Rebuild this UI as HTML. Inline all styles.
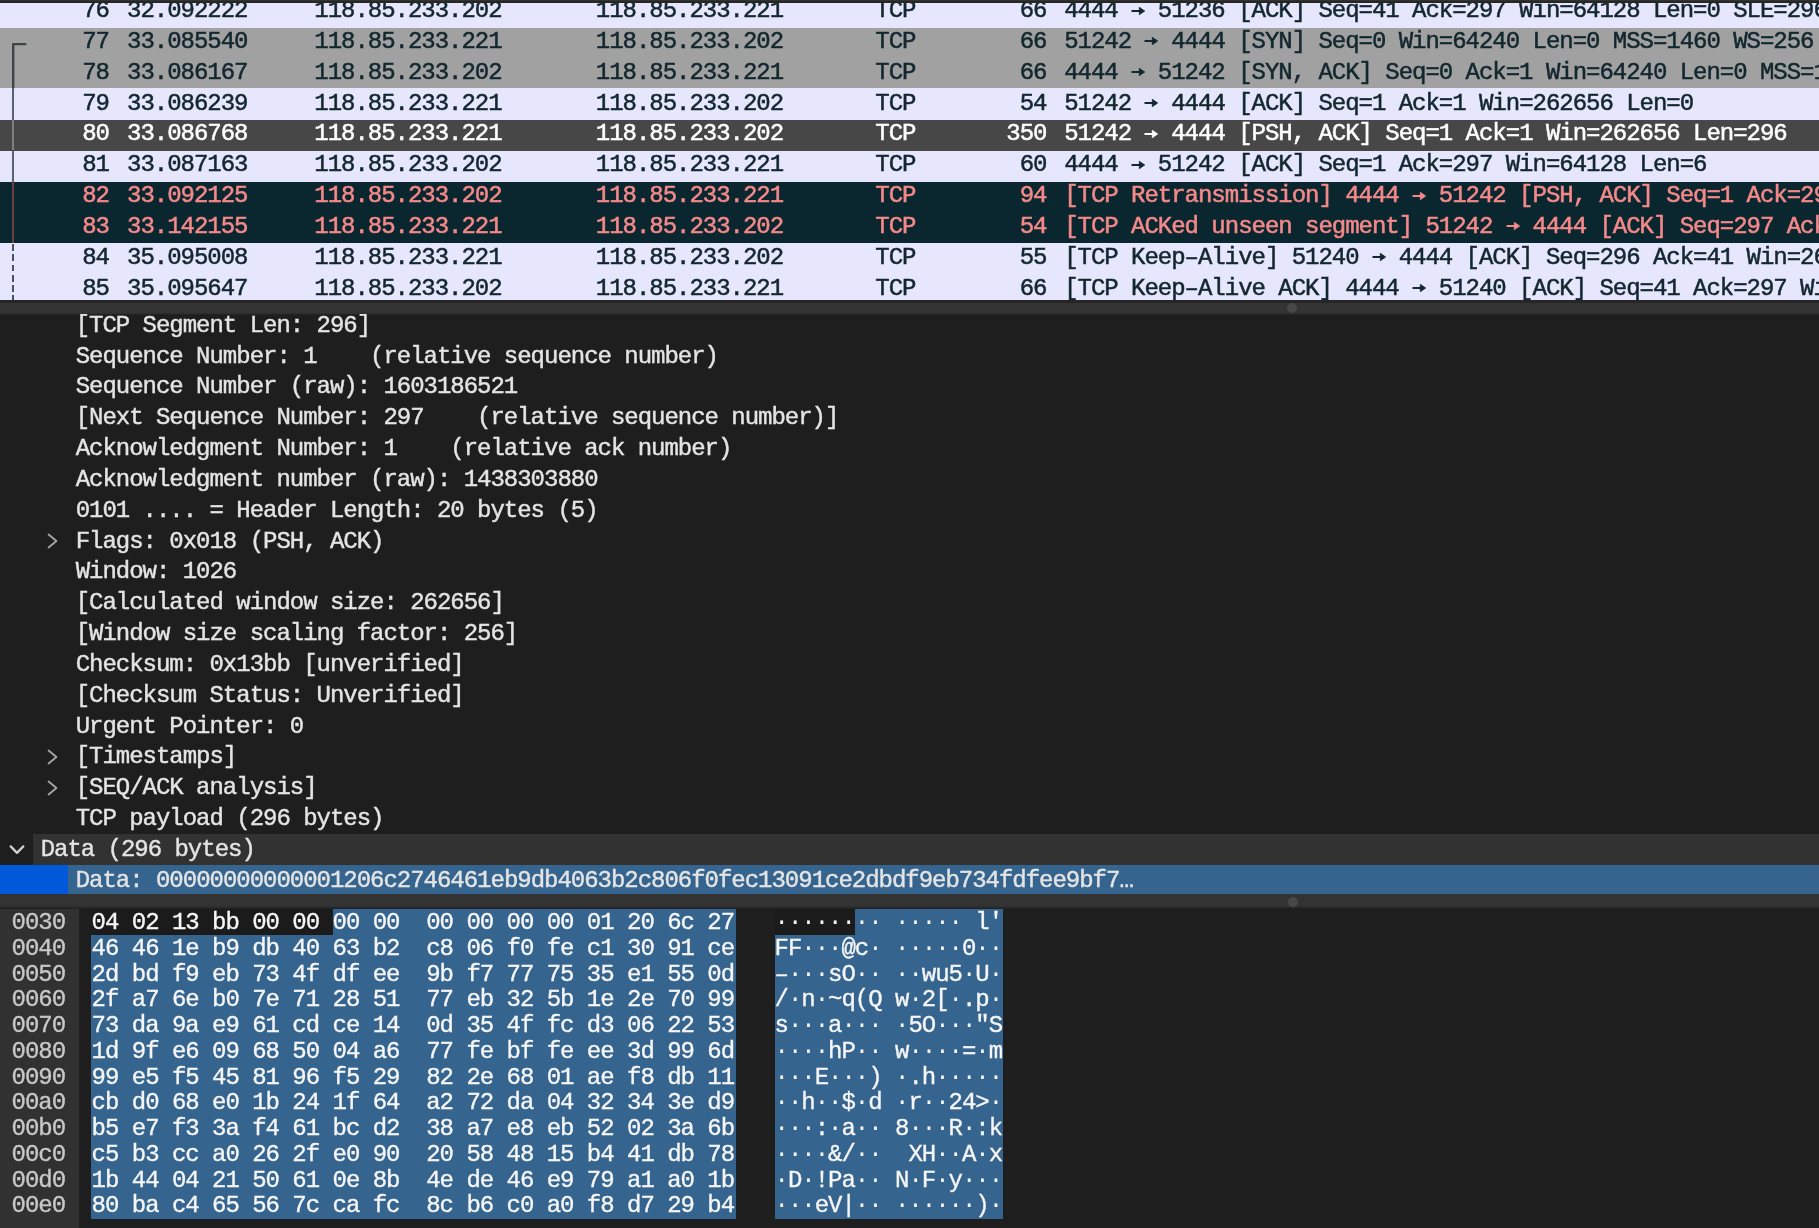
<!DOCTYPE html>
<html><head><meta charset="utf-8"><title>Wireshark</title><style>
html,body{margin:0;padding:0}
body{width:1819px;height:1228px;overflow:hidden;background:#1e1e1e;position:relative;font-family:"Liberation Mono",monospace}
.r{position:absolute;display:block}
.t{position:absolute;white-space:pre;font-family:"Liberation Mono",monospace;font-size:24px;line-height:30px;height:30px;letter-spacing:-1.022px;-webkit-text-stroke:0.5px currentColor}
#list{position:absolute;left:0;top:0;width:1819px;height:300.3px;overflow:hidden}
#detail{position:absolute;left:0;top:313.6px;width:1819px;height:580.3px;overflow:hidden}
#detail>*{margin-top:-313.6px}
#hex{position:absolute;left:0;top:907.1px;width:1819px;height:320.9px;overflow:hidden}
#hex>*{margin-top:-907.1px}
.ar{display:inline-block;position:relative;width:13.38px;height:0;letter-spacing:0}
.ar svg{position:absolute;left:-0.2px;bottom:1.6px;display:block}
#list,#detail,#hex{will-change:transform}
.t{filter:blur(0.45px)}
.md{-webkit-text-stroke:0px currentColor}
.ln{color:#12272e} .ls{color:#ffffff} .lb{color:#f58989}
.dt{color:#e4e4e4;-webkit-text-stroke-width:0.42px} .ho{color:#c8c8c8;-webkit-text-stroke-width:0.35px} .hx{color:#f6f6f6;-webkit-text-stroke-width:0.35px}
</style></head><body>
<div id="list">
<div class="r" style="left:0.00px;top:-2.60px;width:1819.00px;height:32.70px;background:#e6e6fd;"></div>
<div class="r" style="left:0.00px;top:28.10px;width:1819.00px;height:32.20px;background:#a1a1a1;"></div>
<div class="r" style="left:0.00px;top:58.30px;width:1819.00px;height:32.10px;background:#a1a1a1;"></div>
<div class="r" style="left:0.00px;top:88.40px;width:1819.00px;height:33.80px;background:#e6e6fd;"></div>
<div class="r" style="left:0.00px;top:120.20px;width:1819.00px;height:32.30px;background:#474747;"></div>
<div class="r" style="left:0.00px;top:150.50px;width:1819.00px;height:33.00px;background:#e6e6fd;"></div>
<div class="r" style="left:0.00px;top:181.50px;width:1819.00px;height:32.90px;background:#0a2730;"></div>
<div class="r" style="left:0.00px;top:212.40px;width:1819.00px;height:32.90px;background:#0a2730;"></div>
<div class="r" style="left:0.00px;top:243.30px;width:1819.00px;height:32.50px;background:#e6e6fd;"></div>
<div class="r" style="left:0.00px;top:273.80px;width:1819.00px;height:32.80px;background:#e6e6fd;"></div>
<div class="t ln" style="left:82.24px;top:-3.83px;">76</div>
<div class="t ln" style="left:127.00px;top:-3.83px;">32.092222</div>
<div class="t ln" style="left:314.30px;top:-3.83px;">118.85.233.202</div>
<div class="t ln" style="left:595.80px;top:-3.83px;">118.85.233.221</div>
<div class="t ln" style="left:875.30px;top:-3.83px;">TCP</div>
<div class="t ln" style="left:1019.74px;top:-3.83px;">66</div>
<div class="t ln" style="left:1064.20px;top:-3.83px;">4444 <span class="ar"><svg width="15" height="10" viewBox="0 0 15 10"><path d="M1.3 5 H9" fill="none" stroke="currentColor" stroke-width="2.1" stroke-linecap="round"/><path d="M8.3 1.3 L13.7 5 L8.3 8.7 Z" fill="currentColor" stroke="currentColor" stroke-width="0.8" stroke-linejoin="round"/></svg></span> 51236 [ACK] Seq=41 Ack=297 Win=64128 Len=0 SLE=296 SRE=297</div>
<div class="t ln" style="left:82.24px;top:27.00px;">77</div>
<div class="t ln" style="left:127.00px;top:27.00px;">33.085540</div>
<div class="t ln" style="left:314.30px;top:27.00px;">118.85.233.221</div>
<div class="t ln" style="left:595.80px;top:27.00px;">118.85.233.202</div>
<div class="t ln" style="left:875.30px;top:27.00px;">TCP</div>
<div class="t ln" style="left:1019.74px;top:27.00px;">66</div>
<div class="t ln" style="left:1064.20px;top:27.00px;">51242 <span class="ar"><svg width="15" height="10" viewBox="0 0 15 10"><path d="M1.3 5 H9" fill="none" stroke="currentColor" stroke-width="2.1" stroke-linecap="round"/><path d="M8.3 1.3 L13.7 5 L8.3 8.7 Z" fill="currentColor" stroke="currentColor" stroke-width="0.8" stroke-linejoin="round"/></svg></span> 4444 [SYN] Seq=0 Win=64240 Len=0 MSS=1460 WS=256 SACK_PERM</div>
<div class="t ln" style="left:82.24px;top:57.83px;">78</div>
<div class="t ln" style="left:127.00px;top:57.83px;">33.086167</div>
<div class="t ln" style="left:314.30px;top:57.83px;">118.85.233.202</div>
<div class="t ln" style="left:595.80px;top:57.83px;">118.85.233.221</div>
<div class="t ln" style="left:875.30px;top:57.83px;">TCP</div>
<div class="t ln" style="left:1019.74px;top:57.83px;">66</div>
<div class="t ln" style="left:1064.20px;top:57.83px;">4444 <span class="ar"><svg width="15" height="10" viewBox="0 0 15 10"><path d="M1.3 5 H9" fill="none" stroke="currentColor" stroke-width="2.1" stroke-linecap="round"/><path d="M8.3 1.3 L13.7 5 L8.3 8.7 Z" fill="currentColor" stroke="currentColor" stroke-width="0.8" stroke-linejoin="round"/></svg></span> 51242 [SYN, ACK] Seq=0 Ack=1 Win=64240 Len=0 MSS=1460 SACK_PERM</div>
<div class="t ln" style="left:82.24px;top:88.66px;">79</div>
<div class="t ln" style="left:127.00px;top:88.66px;">33.086239</div>
<div class="t ln" style="left:314.30px;top:88.66px;">118.85.233.221</div>
<div class="t ln" style="left:595.80px;top:88.66px;">118.85.233.202</div>
<div class="t ln" style="left:875.30px;top:88.66px;">TCP</div>
<div class="t ln" style="left:1019.74px;top:88.66px;">54</div>
<div class="t ln" style="left:1064.20px;top:88.66px;">51242 <span class="ar"><svg width="15" height="10" viewBox="0 0 15 10"><path d="M1.3 5 H9" fill="none" stroke="currentColor" stroke-width="2.1" stroke-linecap="round"/><path d="M8.3 1.3 L13.7 5 L8.3 8.7 Z" fill="currentColor" stroke="currentColor" stroke-width="0.8" stroke-linejoin="round"/></svg></span> 4444 [ACK] Seq=1 Ack=1 Win=262656 Len=0</div>
<div class="t ls" style="left:82.24px;top:119.49px;">80</div>
<div class="t ls" style="left:127.00px;top:119.49px;">33.086768</div>
<div class="t ls" style="left:314.30px;top:119.49px;">118.85.233.221</div>
<div class="t ls" style="left:595.80px;top:119.49px;">118.85.233.202</div>
<div class="t ls" style="left:875.30px;top:119.49px;">TCP</div>
<div class="t ls" style="left:1006.36px;top:119.49px;">350</div>
<div class="t ls" style="left:1064.20px;top:119.49px;">51242 <span class="ar"><svg width="15" height="10" viewBox="0 0 15 10"><path d="M1.3 5 H9" fill="none" stroke="currentColor" stroke-width="2.1" stroke-linecap="round"/><path d="M8.3 1.3 L13.7 5 L8.3 8.7 Z" fill="currentColor" stroke="currentColor" stroke-width="0.8" stroke-linejoin="round"/></svg></span> 4444 [PSH, ACK] Seq=1 Ack=1 Win=262656 Len=296</div>
<div class="t ln" style="left:82.24px;top:150.32px;">81</div>
<div class="t ln" style="left:127.00px;top:150.32px;">33.087163</div>
<div class="t ln" style="left:314.30px;top:150.32px;">118.85.233.202</div>
<div class="t ln" style="left:595.80px;top:150.32px;">118.85.233.221</div>
<div class="t ln" style="left:875.30px;top:150.32px;">TCP</div>
<div class="t ln" style="left:1019.74px;top:150.32px;">60</div>
<div class="t ln" style="left:1064.20px;top:150.32px;">4444 <span class="ar"><svg width="15" height="10" viewBox="0 0 15 10"><path d="M1.3 5 H9" fill="none" stroke="currentColor" stroke-width="2.1" stroke-linecap="round"/><path d="M8.3 1.3 L13.7 5 L8.3 8.7 Z" fill="currentColor" stroke="currentColor" stroke-width="0.8" stroke-linejoin="round"/></svg></span> 51242 [ACK] Seq=1 Ack=297 Win=64128 Len=6</div>
<div class="t lb" style="left:82.24px;top:181.15px;">82</div>
<div class="t lb" style="left:127.00px;top:181.15px;">33.092125</div>
<div class="t lb" style="left:314.30px;top:181.15px;">118.85.233.202</div>
<div class="t lb" style="left:595.80px;top:181.15px;">118.85.233.221</div>
<div class="t lb" style="left:875.30px;top:181.15px;">TCP</div>
<div class="t lb" style="left:1019.74px;top:181.15px;">94</div>
<div class="t lb" style="left:1064.20px;top:181.15px;">[TCP Retransmission] 4444 <span class="ar"><svg width="15" height="10" viewBox="0 0 15 10"><path d="M1.3 5 H9" fill="none" stroke="currentColor" stroke-width="2.1" stroke-linecap="round"/><path d="M8.3 1.3 L13.7 5 L8.3 8.7 Z" fill="currentColor" stroke="currentColor" stroke-width="0.8" stroke-linejoin="round"/></svg></span> 51242 [PSH, ACK] Seq=1 Ack=297 Win=64128 Len=40</div>
<div class="t lb" style="left:82.24px;top:211.98px;">83</div>
<div class="t lb" style="left:127.00px;top:211.98px;">33.142155</div>
<div class="t lb" style="left:314.30px;top:211.98px;">118.85.233.221</div>
<div class="t lb" style="left:595.80px;top:211.98px;">118.85.233.202</div>
<div class="t lb" style="left:875.30px;top:211.98px;">TCP</div>
<div class="t lb" style="left:1019.74px;top:211.98px;">54</div>
<div class="t lb" style="left:1064.20px;top:211.98px;">[TCP ACKed unseen segment] 51242 <span class="ar"><svg width="15" height="10" viewBox="0 0 15 10"><path d="M1.3 5 H9" fill="none" stroke="currentColor" stroke-width="2.1" stroke-linecap="round"/><path d="M8.3 1.3 L13.7 5 L8.3 8.7 Z" fill="currentColor" stroke="currentColor" stroke-width="0.8" stroke-linejoin="round"/></svg></span> 4444 [ACK] Seq=297 Ack=47 Win=262656 Len=0</div>
<div class="t ln" style="left:82.24px;top:242.81px;">84</div>
<div class="t ln" style="left:127.00px;top:242.81px;">35.095008</div>
<div class="t ln" style="left:314.30px;top:242.81px;">118.85.233.221</div>
<div class="t ln" style="left:595.80px;top:242.81px;">118.85.233.202</div>
<div class="t ln" style="left:875.30px;top:242.81px;">TCP</div>
<div class="t ln" style="left:1019.74px;top:242.81px;">55</div>
<div class="t ln" style="left:1064.20px;top:242.81px;">[TCP Keep–Alive] 51240 <span class="ar"><svg width="15" height="10" viewBox="0 0 15 10"><path d="M1.3 5 H9" fill="none" stroke="currentColor" stroke-width="2.1" stroke-linecap="round"/><path d="M8.3 1.3 L13.7 5 L8.3 8.7 Z" fill="currentColor" stroke="currentColor" stroke-width="0.8" stroke-linejoin="round"/></svg></span> 4444 [ACK] Seq=296 Ack=41 Win=262656 Len=1</div>
<div class="t ln" style="left:82.24px;top:273.64px;">85</div>
<div class="t ln" style="left:127.00px;top:273.64px;">35.095647</div>
<div class="t ln" style="left:314.30px;top:273.64px;">118.85.233.202</div>
<div class="t ln" style="left:595.80px;top:273.64px;">118.85.233.221</div>
<div class="t ln" style="left:875.30px;top:273.64px;">TCP</div>
<div class="t ln" style="left:1019.74px;top:273.64px;">66</div>
<div class="t ln" style="left:1064.20px;top:273.64px;">[TCP Keep–Alive ACK] 4444 <span class="ar"><svg width="15" height="10" viewBox="0 0 15 10"><path d="M1.3 5 H9" fill="none" stroke="currentColor" stroke-width="2.1" stroke-linecap="round"/><path d="M8.3 1.3 L13.7 5 L8.3 8.7 Z" fill="currentColor" stroke="currentColor" stroke-width="0.8" stroke-linejoin="round"/></svg></span> 51240 [ACK] Seq=41 Ack=297 Win=64128 Len=0</div>
<div class="r" style="left:0;top:0;width:40px;height:310px;filter:blur(0.4px)">
<svg class="r" style="left:0;top:0" width="40" height="100" viewBox="0 0 40 100"><path d="M26.4 44.1 H13.20 V88.5" fill="none" stroke="#3d4548" stroke-width="2.4" stroke-linejoin="round"/></svg>
<div class="r" style="left:12.00px;top:88.40px;width:2.40px;height:31.80px;background:#5a6273;"></div>
<div class="r" style="left:12.00px;top:120.20px;width:2.40px;height:30.30px;background:#7e7e7e;"></div>
<div class="r" style="left:12.00px;top:150.50px;width:2.40px;height:31.00px;background:#5a6273;"></div>
<div class="r" style="left:12.00px;top:181.50px;width:2.40px;height:61.80px;background:#6d4046;"></div>
<div class="r" style="left:12.00px;top:244.4px;width:2.4px;height:60px;background:repeating-linear-gradient(to bottom,#4a5263 0,#4a5263 6.6px,transparent 6.6px,transparent 10.3px)"></div>
</div>
</div>
<div class="r" style="left:0.00px;top:0.00px;width:1819.00px;height:3.40px;background:#262624;"></div>
<div class="r" style="left:0.00px;top:0.00px;width:1819.00px;height:0.60px;background:#333333;"></div>
<div class="r" style="left:0.00px;top:300.20px;width:1819.00px;height:2.60px;background:#262626;"></div>
<div class="r" style="left:0.00px;top:302.60px;width:1819.00px;height:10.20px;background:#333333;"></div>
<div class="r" style="left:0.00px;top:312.80px;width:1819.00px;height:1.80px;background:linear-gradient(#333333,#1e1e1e);"></div>
<div class="r" style="left:1287.4px;top:302.5px;width:10px;height:10px;border-radius:50%;background:#484848"></div>
<div id="detail">
<div class="r" style="left:33.00px;top:833.80px;width:1786.00px;height:30.80px;background:#323232;"></div>
<div class="r" style="left:0.00px;top:864.60px;width:1819.00px;height:29.30px;background:#35648f;"></div>
<div class="r" style="left:0.00px;top:864.60px;width:67.70px;height:29.30px;background:#0059d8;"></div>
<div class="t dt" style="left:75.70px;top:310.39px;">[TCP Segment Len: 296]</div>
<div class="t dt" style="left:75.70px;top:341.22px;">Sequence Number: 1    (relative sequence number)</div>
<div class="t dt" style="left:75.70px;top:372.05px;">Sequence Number (raw): 1603186521</div>
<div class="t dt" style="left:75.70px;top:402.88px;">[Next Sequence Number: 297    (relative sequence number)]</div>
<div class="t dt" style="left:75.70px;top:433.71px;">Acknowledgment Number: 1    (relative ack number)</div>
<div class="t dt" style="left:75.70px;top:464.54px;">Acknowledgment number (raw): 1438303880</div>
<div class="t dt" style="left:75.70px;top:495.37px;">0101 .... = Header Length: 20 bytes (5)</div>
<div class="t dt" style="left:75.70px;top:526.20px;">Flags: 0x018 (PSH, ACK)</div>
<svg class="r" style="left:44px;top:530.60px" width="20" height="20" viewBox="0 0 20 20"><path d="M4.6 3.6 L12.4 10 L4.6 16.4" fill="none" stroke="#a2a2a2" stroke-width="2.0" stroke-linecap="round" stroke-linejoin="round"/></svg>
<div class="t dt" style="left:75.70px;top:557.03px;">Window: 1026</div>
<div class="t dt" style="left:75.70px;top:587.86px;">[Calculated window size: 262656]</div>
<div class="t dt" style="left:75.70px;top:618.69px;">[Window size scaling factor: 256]</div>
<div class="t dt" style="left:75.70px;top:649.52px;">Checksum: 0x13bb [unverified]</div>
<div class="t dt" style="left:75.70px;top:680.35px;">[Checksum Status: Unverified]</div>
<div class="t dt" style="left:75.70px;top:711.18px;">Urgent Pointer: 0</div>
<div class="t dt" style="left:75.70px;top:742.01px;">[Timestamps]</div>
<svg class="r" style="left:44px;top:746.41px" width="20" height="20" viewBox="0 0 20 20"><path d="M4.6 3.6 L12.4 10 L4.6 16.4" fill="none" stroke="#a2a2a2" stroke-width="2.0" stroke-linecap="round" stroke-linejoin="round"/></svg>
<div class="t dt" style="left:75.70px;top:772.84px;">[SEQ/ACK analysis]</div>
<svg class="r" style="left:44px;top:777.24px" width="20" height="20" viewBox="0 0 20 20"><path d="M4.6 3.6 L12.4 10 L4.6 16.4" fill="none" stroke="#a2a2a2" stroke-width="2.0" stroke-linecap="round" stroke-linejoin="round"/></svg>
<div class="t dt" style="left:75.70px;top:803.67px;">TCP payload (296 bytes)</div>
<div class="t dt" style="left:40.70px;top:834.50px;">Data (296 bytes)</div>
<svg class="r" style="left:6.5px;top:839.40px" width="20" height="20" viewBox="0 0 20 20"><path d="M3.7 6.4 L10 12.9 L16.3 6.4" fill="none" stroke="#d0d0d0" stroke-width="2.3" stroke-linecap="round" stroke-linejoin="round"/></svg>
<div class="t dt" style="left:75.70px;top:865.33px;">Data<span>:</span> 00000000000001206c2746461eb9db4063b2c806f0fec13091ce2dbdf9eb734fdfee9bf7…</div>
</div>
<div class="r" style="left:0.00px;top:893.90px;width:1819.00px;height:12.40px;background:#333333;"></div>
<div class="r" style="left:0.00px;top:906.30px;width:1819.00px;height:2.60px;background:linear-gradient(#333333,#1e1e1e);"></div>
<div class="r" style="left:1287.5px;top:896.5px;width:10px;height:10px;border-radius:50%;background:#484848"></div>
<div id="hex">
<div class="r" style="left:0.00px;top:909.20px;width:79.20px;height:318.80px;background:#313131;"></div>
<div class="r" style="left:91.00px;top:909.40px;width:241.50px;height:25.85px;background:#1b1b1b;"></div>
<div class="r" style="left:332.50px;top:909.40px;width:403.40px;height:25.85px;background:#35648f;"></div>
<div class="r" style="left:91.00px;top:935.15px;width:644.90px;height:283.85px;background:#35648f;"></div>
<div class="r" style="left:774.60px;top:909.40px;width:80.70px;height:25.85px;background:#1b1b1b;"></div>
<div class="r" style="left:855.30px;top:909.40px;width:147.70px;height:25.85px;background:#35648f;"></div>
<div class="r" style="left:774.60px;top:935.15px;width:228.40px;height:283.85px;background:#35648f;"></div>
<div class="t ho" style="left:11.60px;top:908.20px;letter-spacing:-1.017px">0030</div>
<div class="t hx" style="left:91.60px;top:908.20px;letter-spacing:-1.017px">04 02 13 bb 00 00 00 00  00 00 00 00 01 20 6c 27</div>
<div class="t hx" style="left:774.50px;top:908.20px;letter-spacing:-1.017px"><span class="md">········</span> <span class="md">·····</span> l&#x27;</div>
<div class="t ho" style="left:11.60px;top:933.95px;letter-spacing:-1.017px">0040</div>
<div class="t hx" style="left:91.60px;top:933.95px;letter-spacing:-1.017px">46 46 1e b9 db 40 63 b2  c8 06 f0 fe c1 30 91 ce</div>
<div class="t hx" style="left:774.50px;top:933.95px;letter-spacing:-1.017px">FF<span class="md">···</span>@c<span class="md">·</span> <span class="md">·····</span>0<span class="md">··</span></div>
<div class="t ho" style="left:11.60px;top:959.70px;letter-spacing:-1.017px">0050</div>
<div class="t hx" style="left:91.60px;top:959.70px;letter-spacing:-1.017px">2d bd f9 eb 73 4f df ee  9b f7 77 75 35 e1 55 0d</div>
<div class="t hx" style="left:774.50px;top:959.70px;letter-spacing:-1.017px">–<span class="md">···</span>sO<span class="md">··</span> <span class="md">··</span>wu5<span class="md">·</span>U<span class="md">·</span></div>
<div class="t ho" style="left:11.60px;top:985.45px;letter-spacing:-1.017px">0060</div>
<div class="t hx" style="left:91.60px;top:985.45px;letter-spacing:-1.017px">2f a7 6e b0 7e 71 28 51  77 eb 32 5b 1e 2e 70 99</div>
<div class="t hx" style="left:774.50px;top:985.45px;letter-spacing:-1.017px">/<span class="md">·</span>n<span class="md">·</span>~q(Q w<span class="md">·</span>2[<span class="md">·</span>.p<span class="md">·</span></div>
<div class="t ho" style="left:11.60px;top:1011.20px;letter-spacing:-1.017px">0070</div>
<div class="t hx" style="left:91.60px;top:1011.20px;letter-spacing:-1.017px">73 da 9a e9 61 cd ce 14  0d 35 4f fc d3 06 22 53</div>
<div class="t hx" style="left:774.50px;top:1011.20px;letter-spacing:-1.017px">s<span class="md">···</span>a<span class="md">···</span> <span class="md">·</span>5O<span class="md">···</span>&quot;S</div>
<div class="t ho" style="left:11.60px;top:1036.95px;letter-spacing:-1.017px">0080</div>
<div class="t hx" style="left:91.60px;top:1036.95px;letter-spacing:-1.017px">1d 9f e6 09 68 50 04 a6  77 fe bf fe ee 3d 99 6d</div>
<div class="t hx" style="left:774.50px;top:1036.95px;letter-spacing:-1.017px"><span class="md">····</span>hP<span class="md">··</span> w<span class="md">····</span>=<span class="md">·</span>m</div>
<div class="t ho" style="left:11.60px;top:1062.70px;letter-spacing:-1.017px">0090</div>
<div class="t hx" style="left:91.60px;top:1062.70px;letter-spacing:-1.017px">99 e5 f5 45 81 96 f5 29  82 2e 68 01 ae f8 db 11</div>
<div class="t hx" style="left:774.50px;top:1062.70px;letter-spacing:-1.017px"><span class="md">···</span>E<span class="md">···</span>) <span class="md">·</span>.h<span class="md">·····</span></div>
<div class="t ho" style="left:11.60px;top:1088.45px;letter-spacing:-1.017px">00a0</div>
<div class="t hx" style="left:91.60px;top:1088.45px;letter-spacing:-1.017px">cb d0 68 e0 1b 24 1f 64  a2 72 da 04 32 34 3e d9</div>
<div class="t hx" style="left:774.50px;top:1088.45px;letter-spacing:-1.017px"><span class="md">··</span>h<span class="md">··</span>$<span class="md">·</span>d <span class="md">·</span>r<span class="md">··</span>24&gt;<span class="md">·</span></div>
<div class="t ho" style="left:11.60px;top:1114.20px;letter-spacing:-1.017px">00b0</div>
<div class="t hx" style="left:91.60px;top:1114.20px;letter-spacing:-1.017px">b5 e7 f3 3a f4 61 bc d2  38 a7 e8 eb 52 02 3a 6b</div>
<div class="t hx" style="left:774.50px;top:1114.20px;letter-spacing:-1.017px"><span class="md">···</span>:<span class="md">·</span>a<span class="md">··</span> 8<span class="md">···</span>R<span class="md">·</span>:k</div>
<div class="t ho" style="left:11.60px;top:1139.95px;letter-spacing:-1.017px">00c0</div>
<div class="t hx" style="left:91.60px;top:1139.95px;letter-spacing:-1.017px">c5 b3 cc a0 26 2f e0 90  20 58 48 15 b4 41 db 78</div>
<div class="t hx" style="left:774.50px;top:1139.95px;letter-spacing:-1.017px"><span class="md">····</span>&amp;/<span class="md">··</span>  XH<span class="md">··</span>A<span class="md">·</span>x</div>
<div class="t ho" style="left:11.60px;top:1165.70px;letter-spacing:-1.017px">00d0</div>
<div class="t hx" style="left:91.60px;top:1165.70px;letter-spacing:-1.017px">1b 44 04 21 50 61 0e 8b  4e de 46 e9 79 a1 a0 1b</div>
<div class="t hx" style="left:774.50px;top:1165.70px;letter-spacing:-1.017px"><span class="md">·</span>D<span class="md">·</span>!Pa<span class="md">··</span> N<span class="md">·</span>F<span class="md">·</span>y<span class="md">···</span></div>
<div class="t ho" style="left:11.60px;top:1191.45px;letter-spacing:-1.017px">00e0</div>
<div class="t hx" style="left:91.60px;top:1191.45px;letter-spacing:-1.017px">80 ba c4 65 56 7c ca fc  8c b6 c0 a0 f8 d7 29 b4</div>
<div class="t hx" style="left:774.50px;top:1191.45px;letter-spacing:-1.017px"><span class="md">···</span>eV|<span class="md">··</span> <span class="md">······</span>)<span class="md">·</span></div>
</div>
</body></html>
